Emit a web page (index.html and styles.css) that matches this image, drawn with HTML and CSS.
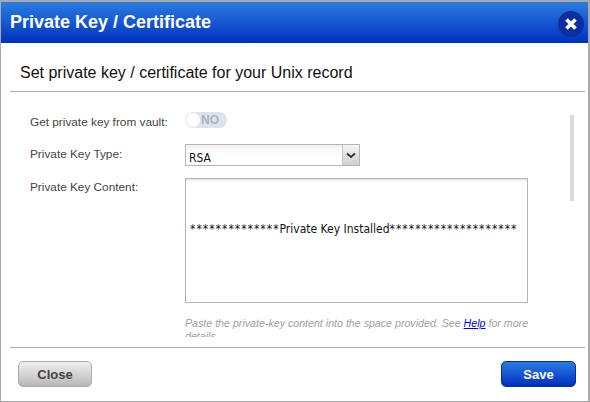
FILE: index.html
```html
<!DOCTYPE html>
<html lang="en">
<head>
    <meta charset="UTF-8">
    <title>Private Key / Certificate</title>
    <link rel="stylesheet" href="styles.css">
</head>
<body>
    <div class="dialog">
        <div class="dialog-header">
            <h1>Private Key / Certificate</h1>
            <span class="close-icon">
                <svg width="14" height="14" viewBox="0 0 14 14"><path d="M2.5 2.5L11.5 11.5M11.5 2.5L2.5 11.5" stroke="#fff" stroke-width="3.8" fill="none"/></svg>
            </span>
        </div>
        <h2 class="dialog-title">Set private key / certificate for your Unix record</h2>
        <div class="dialog-body">
            <div class="form">
                <div class="row row-vault">
                    <label>Get private key from vault:</label>
                    <div class="toggle"><span class="knob"></span><span class="toggle-text">NO</span></div>
                </div>
                <div class="row row-type">
                    <label>Private Key Type:</label>
                    <div class="select">
                        <span class="select-value">RSA</span>
                        <span class="select-arrow">
                            <svg width="10" height="7" viewBox="0 0 10 7"><path d="M1 1.5L5 5L9 1.5" stroke="#333" stroke-width="2" fill="none"/></svg>
                        </span>
                    </div>
                </div>
                <div class="row row-content">
                    <label>Private Key Content:</label>
                    <div class="field">
                        <div class="textarea"><span class="stars">**************</span>Private Key Installed<span class="stars">********************</span></div>
                        <p class="hint">Paste the private-key content into the space provided. See <a href="#">Help</a> for more details</p>
                    </div>
                </div>
            </div>
            <div class="scrollbar"></div>
        </div>
        <div class="dialog-footer">
            <button class="btn btn-close">Close</button>
            <button class="btn btn-save">Save</button>
        </div>
    </div>
</body>
</html>
```

FILE: styles.css
```css
html, body {
    margin: 0;
    padding: 0;
}
body {
    width: 590px;
    height: 402px;
    overflow: hidden;
    background-color: #fff;
    font-family: "Liberation Sans", Arial, sans-serif;
}
.dialog {
    box-sizing: border-box;
    width: 590px;
    height: 402px;
    display: flex;
    flex-direction: column;
    border-style: solid;
    border-color: #a9a9a9;
    border-width: 2px 2px 1px 1px;
    background-color: #fff;
}
.dialog-header {
    height: 41px;
    flex: none;
    display: flex;
    align-items: center;
    justify-content: space-between;
    padding: 0 4px 0 9px;
    background: linear-gradient(to bottom, #2b7de0, #0030c0);
}
.dialog-header h1 {
    margin: 0;
    color: #fff;
    font-size: 18px;
    font-weight: bold;
}
.close-icon {
    width: 26px;
    height: 26px;
    margin-top: 3px;
    border-radius: 50%;
    background-color: #0a2f9e;
    display: flex;
    align-items: center;
    justify-content: center;
}
.dialog-title {
    flex: none;
    margin: 0 3px 0 9px;
    padding: 20px 0 0 10px;
    height: 28px;
    border-bottom: 1px solid #b0b0b0;
    color: #111;
    font-size: 16px;
    line-height: 20px;
    font-weight: normal;
}
.dialog-body {
    flex: 1;
    min-height: 0;
    margin-bottom: 10px;
    overflow: hidden;
    position: relative;
}
.form {
    padding: 20px 0 0 29px;
    font-size: 11.8px;
    color: #444;
}
.row {
    display: flex;
}
.row label {
    width: 155px;
    flex: none;
}
.row-vault {
    height: 32px;
    line-height: 18px;
}
.row-vault label {
    padding-top: 1px;
}
.toggle {
    width: 42px;
    height: 16px;
    border-radius: 8px;
    background-color: #dde3ea;
    display: flex;
    align-items: center;
}
.knob {
    box-sizing: border-box;
    width: 14px;
    height: 14px;
    margin-left: 1px;
    border-radius: 50%;
    background-color: #fff;
}
.toggle-text {
    margin-left: 1px;
    color: #aab4c0;
    font-size: 12px;
    font-weight: bold;
}
.row-type {
    height: 34px;
    line-height: 16px;
}
.row-type label {
    padding-top: 2px;
}
.select {
    box-sizing: border-box;
    width: 175px;
    height: 22px;
    display: flex;
    border: 1px solid #b5b5b5;
    background: linear-gradient(to bottom, #f1f1f1, #fff 45%);
}
.select-value {
    flex: 1;
    padding: 5px 0 0 3px;
    color: #111;
    font-family: "DejaVu Sans Condensed", "DejaVu Sans", sans-serif;
    font-stretch: condensed;
    font-size: 12px;
}
.select-arrow {
    width: 16px;
    border-left: 1px solid #c4c4c4;
    background: linear-gradient(to bottom, #f4f4f4, #cfcfcf);
    display: flex;
    align-items: center;
    justify-content: center;
}
.row-content {
    line-height: 16px;
}
.row-content label {
    padding-top: 1px;
}
.field {
    width: 343px;
    flex: none;
}
.textarea {
    box-sizing: border-box;
    height: 125px;
    padding: 43px 0 0 4px;
    border: 1px solid #b5b5b5;
    box-shadow: inset 0 3px 3px -2px #ddd;
    color: #111;
    font-family: "DejaVu Sans Condensed", "DejaVu Sans", sans-serif;
    font-stretch: condensed;
    font-size: 12px;
    line-height: 15px;
    white-space: nowrap;
}
.stars {
    letter-spacing: 1px;
}
.hint {
    margin: 14px -6px 0 0;
    color: #a0a0a0;
    font-size: 10.65px;
    font-style: italic;
    line-height: 13px;
}
.hint a {
    color: #0000ee;
}
.scrollbar {
    position: absolute;
    top: 23px;
    left: 569px;
    width: 4px;
    height: 86px;
    background-color: #dcd9d6;
}
.dialog-footer {
    flex: none;
    height: 53px;
    margin: 0 3px 0 9px;
    padding: 0 9px 0 8px;
    border-top: 1px solid #b0b0b0;
    display: flex;
    justify-content: space-between;
    align-items: flex-start;
}
.btn {
    box-sizing: border-box;
    width: 75px;
    height: 26px;
    margin-top: 13px;
    border-radius: 5px;
    font-family: "Liberation Sans", Arial, sans-serif;
    font-size: 13px;
    font-weight: bold;
}
.btn-close {
    width: 74px;
    border: 1px solid #aaa;
    background: linear-gradient(to bottom, #f0f0f0, #b8b8b8);
    color: #444;
}
.btn-save {
    border: 1px solid #08308f;
    background: linear-gradient(to bottom, #2b7de0, #0030c0);
    color: #fff;
}
```
